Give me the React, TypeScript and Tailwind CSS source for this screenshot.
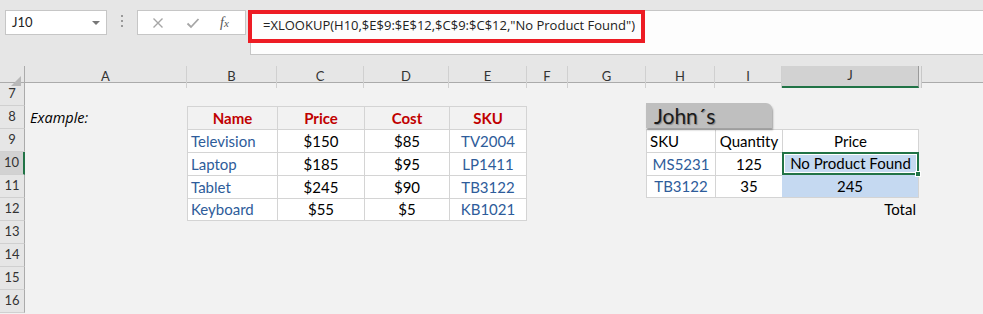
import { Fragment } from "react";

const cols = ["A", "B", "C", "D", "E", "F", "G", "H", "I", "J", ""];
const gridCols =
  "grid grid-cols-[25px_162px_90px_87px_85px_78px_41px_78px_69px_67px_137px_1fr]";

const products = [
  ["Television", "$150", "$85", "TV2004"],
  ["Laptop", "$185", "$95", "LP1411"],
  ["Tablet", "$245", "$90", "TB3122"],
  ["Keyboard", "$55", "$5", "KB1021"],
];

const tableHead = "border-l border-t border-[#d4d4d4] bg-[#f2f2f2]";
const tableCell = "border-l border-t border-[#d4d4d4] bg-white";

function Cell({ className = "", children }: { className?: string; children?: React.ReactNode }) {
  return <div className={`flex h-[23px] items-center overflow-visible whitespace-nowrap ${className}`}>{children}</div>;
}

function Toolbar() {
  return (
    <div className="relative h-[66px] bg-[#e6e6e6]">
      {/* Name box */}
      <div className="absolute left-[5px] top-[10px] flex h-[25px] w-[102px] items-center justify-between border border-[#c6c6c6] bg-white pl-[6px] pr-[6px] text-[13px] text-[#222]">
        <span>J10</span>
        <span className="h-0 w-0 border-x-[4px] border-t-[4px] border-x-transparent border-t-[#777]" />
      </div>
      <div className="absolute left-[121px] top-[15px] flex flex-col gap-[3px]">
        <span className="h-[2px] w-[2px] bg-[#999]" />
        <span className="h-[2px] w-[2px] bg-[#999]" />
        <span className="h-[2px] w-[2px] bg-[#999]" />
      </div>
      {/* Cancel / enter / fx */}
      <div className="absolute left-[137px] top-[10px] flex h-[25px] w-[109px] items-center border border-[#c6c6c6] bg-white">
        <svg width="12" height="12" viewBox="0 0 12 12" className="ml-[14px]">
          <path d="M1.5 1.5 L10.5 10.5 M10.5 1.5 L1.5 10.5" stroke="#a6a6a6" strokeWidth="1.4" />
        </svg>
        <svg width="14" height="12" viewBox="0 0 14 12" className="ml-[22px]">
          <path d="M1.5 6.5 L5 10 L12.5 2" stroke="#a6a6a6" strokeWidth="1.8" fill="none" />
        </svg>
        <span className="ml-[20px] font-['Liberation_Serif',serif] text-[14px] italic text-[#555]">
          f<span className="text-[11px]">x</span>
        </span>
      </div>
      {/* Formula bar */}
      <div className="absolute left-[250px] right-0 top-[10px] h-[45px] border-y border-l border-[#c6c6c6] bg-[#fdfdfd]">
        <div className="pl-[12px] pt-[5px] font-['Open_Sans',sans-serif] text-[13px] text-[#222]">
          =XLOOKUP(H10,$E$9:$E$12,$C$9:$C$12,"No Product Found")
        </div>
      </div>
      <div className="absolute left-[248px] top-[10px] h-[33px] w-[397px] border-[4px] border-[#ed1c24]" />
    </div>
  );
}

function HeaderRow() {
  return (
    <div className={`${gridCols} h-[17px] border-b border-[#ababab] bg-[#e6e6e6] text-[13px] text-[#333]`}>
      <div className="relative border-r border-[#ababab]">
        <span className="absolute bottom-[2px] right-[3px] h-0 w-0 border-b-[10px] border-l-[10px] border-b-[#b8b8b8] border-l-transparent" />
      </div>
      {cols.map((c, i) => (
        <div
          key={i}
          className={`flex items-center justify-center border-r ${
            c === "J"
              ? "border-b-2 border-b-[#217346] border-r-[#9a9a9a] bg-[#d2d2d2]"
              : c === ""
                ? "border-l-2 border-l-[#e6e6e6] border-r-0"
                : "border-[#d0d0d0]"
          }`}
        >
          {c === "" ? <span className="mr-auto h-full w-px bg-[#c8c8c8]" /> : c}
        </div>
      ))}
    </div>
  );
}

function RowHead({ n }: { n: number }) {
  const sel = n === 10;
  return (
    <div
      className={`flex h-[23px] items-center justify-center border-b border-[#d0d0d0] text-[13px] text-[#333] ${
        sel ? "border-r-2 border-r-[#217346] bg-[#d2d2d2]" : "border-r border-r-[#ababab] bg-[#e6e6e6]"
      }`}
    >
      {n}
    </div>
  );
}

export default function App() {
  return (
    <div className="h-[314px] w-[983px] overflow-hidden bg-[#f2f2f2] font-['Lato','Open_Sans',sans-serif] text-[15px] text-black">
      <Toolbar />
      <HeaderRow />
      {[7, 8, 9, 10, 11, 12, 13, 14, 15, 16].map((n) => {
        const p = n >= 9 && n <= 12 ? products[n - 9] : null;
        const lastRow = n === 12;
        return (
          <div key={n} className={gridCols}>
            <RowHead n={n} />
            {/* A */}
            <Cell className="pl-[5px] font-['Open_Sans',sans-serif] text-[14.5px] font-normal italic">
              {n === 8 ? "Example:" : null}
            </Cell>
            {/* B-E */}
            {n === 8 &&
              ["Name", "Price", "Cost", "SKU"].map((h, i) => (
                <Cell key={h} className={`${tableHead} justify-center font-bold text-[#c00000] ${i === 3 ? "border-r" : ""}`}>
                  {h}
                </Cell>
              ))}
            {p &&
              p.map((v, i) => (
                <Cell
                  key={i}
                  className={`${tableCell} ${lastRow ? "border-b" : ""} ${i === 3 ? "border-r" : ""} ${
                    i === 0 ? "pl-[3px] text-[#2e5c9a]" : i === 3 ? "justify-center text-[#2e5c9a]" : "justify-center"
                  }`}
                >
                  {v}
                </Cell>
              ))}
            {!p && n !== 8 && (
              <Fragment>
                <Cell />
                <Cell />
                <Cell />
                <Cell />
              </Fragment>
            )}
            {/* F, G */}
            <Cell />
            <Cell />
            {/* H-J */}
            {n === 8 ? (
              <Fragment>
                <Cell className="relative">
                  <div className="absolute left-0 top-[-3px] flex h-[25px] w-[126px] items-center rounded-tr-[6px] bg-[#bfbfbf] pl-[8px] text-[21px] font-normal text-[#1a1a1a] shadow-[1px_2px_2px_rgba(0,0,0,0.35)] [text-shadow:1px_1px_1px_rgba(0,0,0,0.3)]">
                    John´s
                  </div>
                </Cell>
                <Cell />
                <Cell />
              </Fragment>
            ) : n === 9 ? (
              <Fragment>
                <Cell className={`${tableCell} pl-[3px]`}>SKU</Cell>
                <Cell className={`${tableCell} justify-center`}>Quantity</Cell>
                <Cell className={`${tableCell} justify-center border-r`}>Price</Cell>
              </Fragment>
            ) : n === 10 ? (
              <Fragment>
                <Cell className={`${tableCell} justify-center text-[#2e5c9a]`}>MS5231</Cell>
                <Cell className={`${tableCell} justify-center`}>125</Cell>
                <Cell className="relative justify-center border-2 border-[#217346] bg-[#c5d9f1] outline outline-1 -outline-offset-3 outline-white">
                  No Product Found
                  <span className="absolute bottom-[-4px] right-[-4px] h-[6px] w-[6px] border border-white bg-[#217346]" />
                </Cell>
              </Fragment>
            ) : n === 11 ? (
              <Fragment>
                <Cell className={`${tableCell} border-b justify-center text-[#2e5c9a]`}>TB3122</Cell>
                <Cell className={`${tableCell} border-b justify-center`}>35</Cell>
                <Cell className="justify-center border-b border-r border-[#d4d4d4] bg-[#c5d9f1]">245</Cell>
              </Fragment>
            ) : n === 12 ? (
              <Fragment>
                <Cell />
                <Cell />
                <Cell className="justify-end pr-[3px]">Total</Cell>
              </Fragment>
            ) : (
              <Fragment>
                <Cell />
                <Cell />
                <Cell />
              </Fragment>
            )}
            <Cell />
          </div>
        );
      })}
    </div>
  );
}
